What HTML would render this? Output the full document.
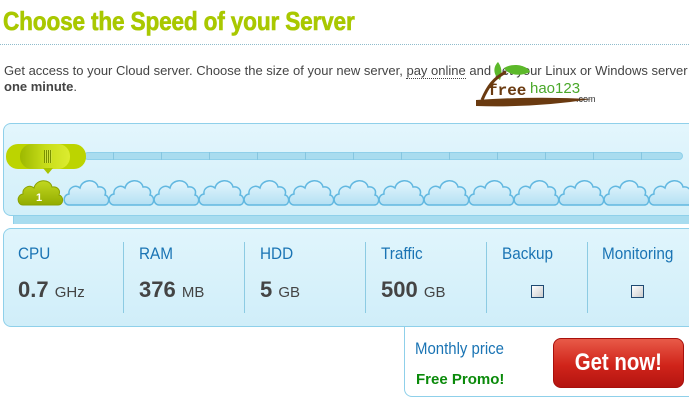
<!DOCTYPE html>
<html><head><meta charset="utf-8"><style>
*{margin:0;padding:0;box-sizing:border-box}
body{width:689px;height:407px;overflow:hidden;background:#fff;font-family:"Liberation Sans",sans-serif;position:relative}
.a{position:absolute}
h1{position:absolute;left:3px;top:6px;font-size:26px;font-weight:bold;color:#a9c800;white-space:nowrap;transform:scaleX(.87);transform-origin:left top;letter-spacing:-0.2px;-webkit-text-stroke:0.6px #a9c800}
.dot{left:0;top:44px;width:689px;border-top:1px dotted #8fbccc}
.desc{left:4px;top:63px;font-size:13px;color:#444;line-height:16px;white-space:nowrap;width:720px}
.desc u{text-decoration:none;border-bottom:1px dotted #444}
.p1{left:3px;top:123px;width:700px;height:93px;border:1px solid #8fd0ea;border-radius:8px;background:linear-gradient(#e3f6fd,#d2eff9)}
.strip{left:13px;top:216px;width:690px;height:8px;background:#a8dcef;border-left:1px solid #8fd0ea}
.track{left:84px;top:152px;width:599px;height:8px;background:#a9dcef;border:1px solid #90d0ea;border-radius:4px}
.tick{top:152px;width:1px;height:8px;background:#86c6e0}
.pill{left:6px;top:144px;width:80px;height:25px;border-radius:12px;background:#bcd400}
.pill2{left:20px;top:144px;width:50px;height:25px;border-radius:12px;background:linear-gradient(90deg,#9db800,#c7dd1a,#dcec30)}
.grip{left:44px;top:150px;width:8px;height:13px;background:repeating-linear-gradient(90deg,#7a9000 0 1px,#d0e43a 1px 2px)}
.arrow{left:43px;top:168px;width:0;height:0;border-left:5px solid transparent;border-right:5px solid transparent;border-top:6px solid #a8c400}
.p2{left:3px;top:228px;width:700px;height:99px;border:1px solid #8fd0ea;border-radius:8px;background:linear-gradient(#e0f5fc,#d0eef9)}
.col{top:228px;height:99px}
.lab{position:absolute;top:16px;font-size:17px;color:#1a74b4;transform:scaleX(.9);transform-origin:left;white-space:nowrap}
.val{position:absolute;top:49px;font-size:22px;font-weight:bold;color:#444;white-space:nowrap}
.val small{font-size:15px;font-weight:normal}
.div{top:242px;width:1px;height:71px;background:#8ccbe3}
.cb{position:absolute;top:57px;width:13px;height:13px;border:1px solid #1f4a72;background:linear-gradient(135deg,#fff,#ccc)}
.price{left:404px;top:327px;width:300px;height:70px;border:1px solid #8fd0ea;border-top:none;border-radius:0 0 0 8px;background:#fff}
.btn{left:553px;top:338px;width:131px;height:50px;border-radius:8px;background:linear-gradient(#e85a48,#d0241a 55%,#b41410);border:1px solid #a8100c;color:#fff;font-size:24px;font-weight:bold;text-align:center;line-height:48px}
.btn span{display:inline-block;transform:scaleX(.85)}
</style></head><body>
<h1>Choose the Speed of your Server</h1>
<div class="a dot"></div>
<div class="a desc">Get access to your Cloud server. Choose the size of your new server, <u>pay online</u> and get your Linux or Windows server in<br><b>one minute</b>.</div>
<div class="a" style="left:474px;top:58px;width:130px;height:50px">
<svg width="130" height="50"><path d="M24 4c-6 6-4 14 2 18 3-8 1-14-2-18z" fill="#5cb82a"/><path d="M30 10c10-6 24-2 26 4-10 5-22 3-26-4z" fill="#5cb82a"/><path d="M8 42c6-14 12-22 24-28" stroke="#6a3a10" stroke-width="3" fill="none"/><path d="M2 42 Q60 38 118 41 Q60 50 2 48z" fill="#6a3a10"/>
<text x="14" y="37" font-family="Liberation Mono" font-size="16" font-weight="bold" fill="#6a3a10">free</text><text x="56" y="35" font-family="Liberation Sans" font-size="15" fill="#4aa82a">hao123</text><text x="102" y="44" font-family="Liberation Sans" font-size="9" fill="#333">.com</text></svg></div>

<div class="a p1"></div>
<div class="a strip"></div>
<div class="a track"></div>
<div class="a tick" style="left:113px"></div><div class="a tick" style="left:161px"></div><div class="a tick" style="left:209px"></div><div class="a tick" style="left:257px"></div><div class="a tick" style="left:305px"></div><div class="a tick" style="left:353px"></div><div class="a tick" style="left:401px"></div><div class="a tick" style="left:449px"></div><div class="a tick" style="left:497px"></div><div class="a tick" style="left:545px"></div><div class="a tick" style="left:593px"></div><div class="a tick" style="left:641px"></div>
<div class="a pill"></div><div class="a pill2"></div><div class="a grip"></div><div class="a arrow"></div>
<svg class="a" style="left:0;top:175px" width="689" height="35">
<defs>
<linearGradient id="bl" x1="0" y1="0" x2="0" y2="1"><stop offset="0" stop-color="#e4f6fd"/><stop offset="1" stop-color="#b4e0f3"/></linearGradient>
<linearGradient id="gr" x1="0" y1="0" x2="0" y2="1"><stop offset="0" stop-color="#c2d820"/><stop offset="1" stop-color="#92ac00"/></linearGradient>
<path id="c" d="M6 30c-6 0-7-10 0-11-1-6 6-10 11-6 2-9 16-10 18-1 5-1 9 3 7 8 5 1 5 10-1 10z"/>
</defs>
<use href="#c" x="17" y="0" fill="url(#gr)" stroke="#8aa200" stroke-width="1"/>
<text x="36" y="26" font-family="Liberation Sans" font-size="11" font-weight="bold" fill="#fff">1</text>
<g fill="url(#bl)" stroke="#62b8e0" stroke-width="1.5">
<use href="#c" x="63"/><use href="#c" x="108"/><use href="#c" x="153"/><use href="#c" x="198"/><use href="#c" x="243"/><use href="#c" x="288"/><use href="#c" x="333"/><use href="#c" x="378"/><use href="#c" x="423"/><use href="#c" x="468"/><use href="#c" x="513"/><use href="#c" x="558"/><use href="#c" x="603"/><use href="#c" x="648"/>
</g></svg>

<div class="a p2"></div>
<div class="a col" style="left:18px"><div class="lab">CPU</div><div class="val">0.7 <small>GHz</small></div></div>
<div class="a div" style="left:123px"></div>
<div class="a col" style="left:139px"><div class="lab">RAM</div><div class="val">376 <small>MB</small></div></div>
<div class="a div" style="left:244px"></div>
<div class="a col" style="left:260px"><div class="lab">HDD</div><div class="val">5 <small>GB</small></div></div>
<div class="a div" style="left:365px"></div>
<div class="a col" style="left:381px"><div class="lab">Traffic</div><div class="val">500 <small>GB</small></div></div>
<div class="a div" style="left:486px"></div>
<div class="a col" style="left:502px"><div class="lab">Backup</div><div class="cb" style="left:29px"></div></div>
<div class="a div" style="left:587px"></div>
<div class="a col" style="left:602px"><div class="lab">Monitoring</div><div class="cb" style="left:29px"></div></div>

<div class="a price"></div>
<div class="a" style="left:415px;top:339px;font-size:17px;color:#1a74b4;transform:scaleX(.88);transform-origin:left;white-space:nowrap">Monthly price</div>
<div class="a" style="left:416px;top:371px;font-size:15px;font-weight:bold;color:#0a8a0a;white-space:nowrap">Free Promo!</div>
<div class="a btn"><span>Get now!</span></div>
</body></html>
